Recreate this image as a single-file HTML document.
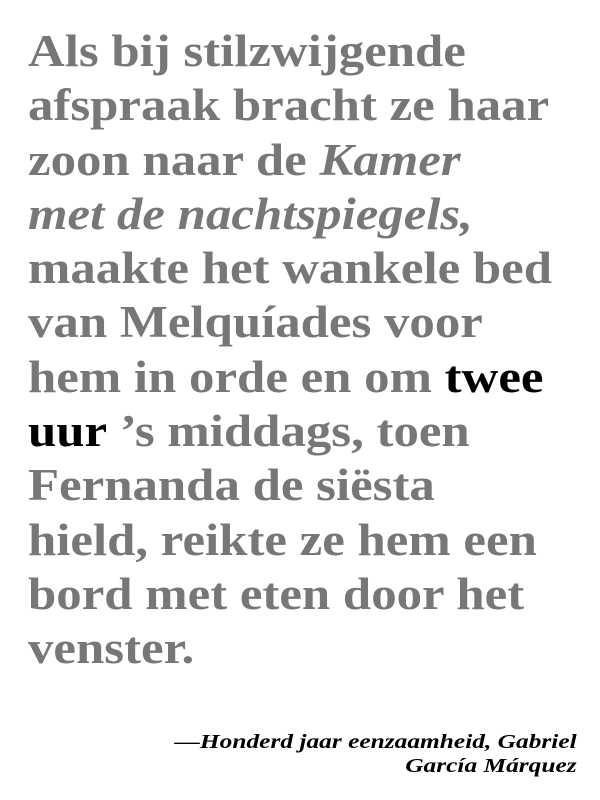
<!DOCTYPE html>
<html><head><meta charset="utf-8"><style>
html,body{margin:0;padding:0;background:#fff;width:600px;height:800px;overflow:hidden}
.q{position:absolute;left:28px;top:24px;font-family:"Liberation Serif",serif;font-weight:bold;font-size:45px;line-height:54.3px;color:#777;white-space:nowrap;transform:scaleX(1.13);transform-origin:0 0}
.q b{color:#000}
.a{position:absolute;right:23px;top:730px;text-align:right;font-family:"Liberation Serif",serif;font-weight:bold;font-style:italic;font-size:20px;line-height:24px;color:#000;white-space:nowrap;transform:scaleX(1.27);transform-origin:100% 0}
</style></head><body>
<div class="q">Als bij stilzwijgende<br>afspraak bracht ze haar<br>zoon naar de <i>Kamer</i><br><i>met de nachtspiegels,</i><br>maakte het wankele bed<br>van Melquíades voor<br>hem in orde en om <b>twee</b><br><b>uur</b> ’s middags, toen<br>Fernanda de siësta<br>hield, reikte ze hem een<br>bord met eten door het<br>venster.</div>
<div class="a">—Honderd jaar eenzaamheid, Gabriel<br>García Márquez</div>
</body></html>
